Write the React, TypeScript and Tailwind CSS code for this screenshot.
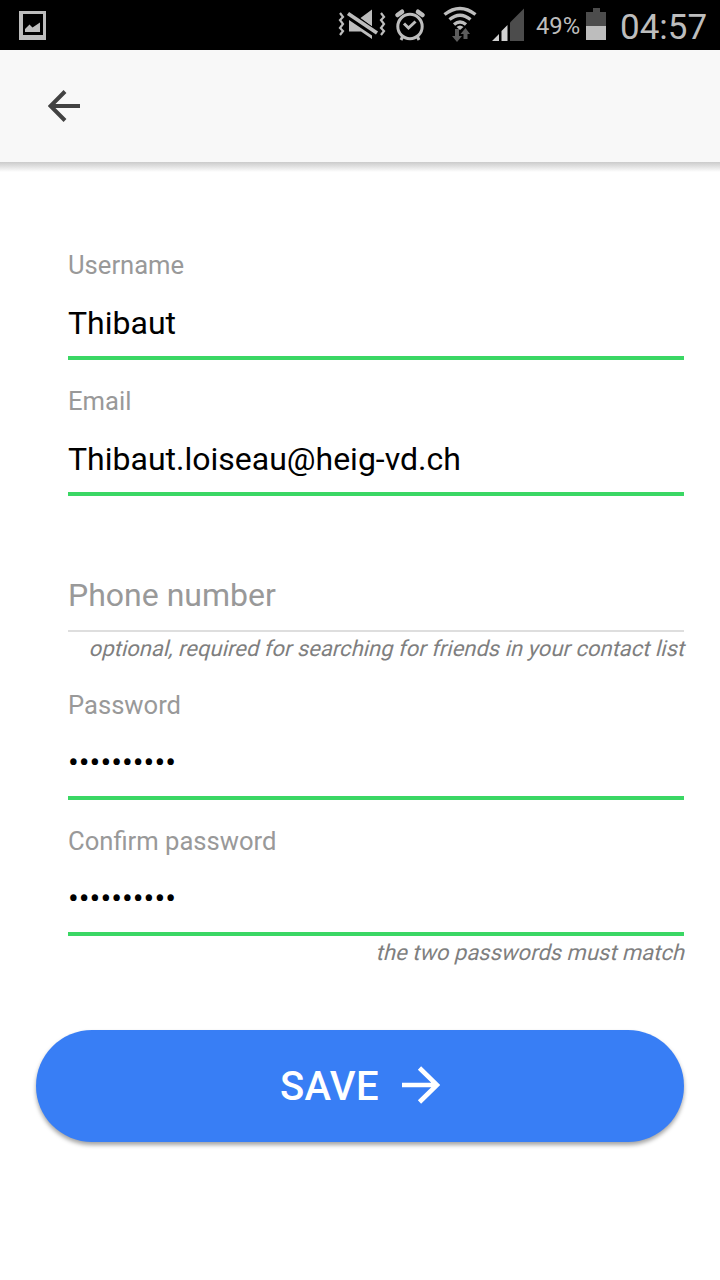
import type { ReactNode } from 'react';

type FieldProps = {
  label: string;
  value?: string;
  hint?: string;
  secret?: boolean;
};

function Field({ label, value, hint, secret = false }: FieldProps) {
  return (
    <div className="flex flex-col">
      <div
        className={`flex h-[136px] flex-col justify-end whitespace-nowrap ${
          value ? 'border-b-4 border-[#3ad764]' : 'border-b-2 border-[#dedede]'
        }`}
      >
        {value ? (
          <>
            <div className="text-[25.6px] leading-[30px] text-[#999999]">{label}</div>
            <div
              className={`text-[32px] leading-[38px] text-black ${secret ? 'mt-[23px] mb-[15px]' : 'mt-[24px] mb-[14px]'}`}
            >
              {value}
            </div>
          </>
        ) : (
          <div className="mb-[16px] text-[32px] leading-[38px] text-[#999999]">{label}</div>
        )}
      </div>
      {hint && (
        <div className="flex h-8 justify-end text-[22px] leading-[34px] whitespace-nowrap text-[#7f7f7f]">
          <span className="origin-[50%_70%] -skew-x-[14deg]">{hint}</span>
        </div>
      )}
    </div>
  );
}

function Icon({ className, viewBox, children }: { className: string; viewBox: string; children: ReactNode }) {
  return (
    <svg className={`shrink-0 ${className}`} viewBox={viewBox} fill="none" aria-hidden="true">
      {children}
    </svg>
  );
}

function StatusBar() {
  return (
    <div className="flex h-[50px] items-start bg-black text-[#bdbdbd]">
      <Icon className="mt-[11px] ml-[19px] h-[29px] w-[27px]" viewBox="0 0 27 29">
        <path d="M0 0H27V29H0ZM4 3V24H24V3Z" fill="currentColor" fillRule="evenodd" />
        <path d="M6 21V18L10.5 13.5L13.5 16.5L21 11.5V21Z" fill="currentColor" />
      </Icon>
      <Icon className="ml-[292px] h-[50px] w-[48px]" viewBox="338 0 48 50">
        <path
          d="M340 13L343 17L340 20L343 24L340 28L343 31L340 35M381 13L384 17L381 20L384 24L381 28L384 31L381 35"
          stroke="currentColor"
          strokeWidth="2.2"
        />
        <path d="M349 20L372 35.5V39L361 31.500H349ZM360.5 18L372 9.5V26.500Z" fill="currentColor" />
        <path d="M347.500 14L377.500 34" stroke="black" strokeWidth="6.500" />
        <path d="M348 13.5L377 33" stroke="currentColor" strokeWidth="3.8" />
      </Icon>
      <Icon className="ml-[8px] h-[50px] w-[32px]" viewBox="394 0 32 50">
        <circle cx="410" cy="26.5" r="12.2" stroke="currentColor" strokeWidth="3" />
        <path d="M397.5 15L402 11.8M422.500 15L418 11.8" stroke="currentColor" strokeWidth="4.600" strokeLinecap="round" />
        <path d="M404 23.5L408.5 28L415.5 21.5" stroke="currentColor" strokeWidth="3" />
        <path d="M403 36L401 40M417 36L419 40" stroke="currentColor" strokeWidth="3" />
      </Icon>
      <Icon className="ml-[16px] h-[50px] w-[36px]" viewBox="442 0 36 50">
        <path
          d="M444.5 14.5Q460 2.5 475.5 14.5M449.5 19.5Q460 11 470.5 19.5M454 24.5Q460 19.5 466 24.5"
          stroke="currentColor"
          strokeWidth="3.4"
        />
        <path d="M456.5 27Q460 24 463.5 27L460 30Z" fill="currentColor" />
        <path d="M455 29H459V36H462L457 42L452 36H455ZM463.5 39V34H460.5L465.5 28L470 34H467.5V39Z" fill="#5c5c5c" />
      </Icon>
      <Icon className="ml-[14px] h-[50px] w-[33px]" viewBox="492 0 33 50">
        <path d="M510 22.5L524 8.5V41H510Z" fill="#4c4c4c" />
        <path d="M492 41L499 34V41ZM501.500 31L507.5 25V41H501.500Z" fill="#d0d0d0" />
      </Icon>
      <span className="ml-[11px] w-[50px] text-[23.8px] leading-[53px]">49%</span>
      <Icon className="h-[50px] w-[20px]" viewBox="586 0 20 50">
        <path d="M586 12H593V8H600V12H606V26H586Z" fill="#4c4c4c" />
        <path d="M586 26H606V40H586Z" fill="currentColor" />
      </Icon>
      <span className="ml-[14px] text-[35px] leading-[55px]">04:57</span>
    </div>
  );
}

export default function App() {
  return (
    <div className="flex h-[1280px] w-[720px] flex-col overflow-hidden bg-white font-['Roboto',sans-serif]">
      <StatusBar />
      <header className="flex h-[112px] shrink-0 items-center bg-[#f8f8f8] pl-[48px]">
        <button type="button" aria-label="Back">
          <Icon className="h-[32px] w-[32px]" viewBox="0 0 32 32">
            <path d="M32 16H3M17 1.5L2.5 16L17 30.5" stroke="#424242" strokeWidth="4" />
          </Icon>
        </button>
      </header>
      <div className="h-[10px] shrink-0 bg-linear-to-b from-[#cbcbcb] via-[#e4e4e4] to-white" />
      <main className="flex flex-col pt-[52px]">
        <form className="flex flex-col pr-[36px] pl-[68px]">
          <Field label="Username" value="Thibaut" />
          <Field label="Email" value="Thibaut.loiseau@heig-vd.ch" />
          <Field label="Phone number" hint="optional, required for searching for friends in your contact list" />
          <Field label="Password" value="••••••••••" secret />
          <Field label="Confirm password" value="••••••••••" hint="the two passwords must match" secret />
        </form>
        <button
          type="button"
          className="mx-[36px] mt-[62px] flex h-[112px] items-center justify-center rounded-full bg-[#387ef5] text-[40px] leading-[48px] font-medium text-white shadow-[0_3px_4px_rgba(0,0,0,0.36)]"
        >
          <span className="pt-[2px] tracking-[0.4px]">SAVE</span>
          <Icon className="mb-[2px] ml-[23px] h-[38px] w-[38px]" viewBox="0 0 38 38">
            <path d="M0 19H34M17.5 2L35 19L17.5 36" stroke="currentColor" strokeWidth="4.6" />
          </Icon>
        </button>
      </main>
    </div>
  );
}
